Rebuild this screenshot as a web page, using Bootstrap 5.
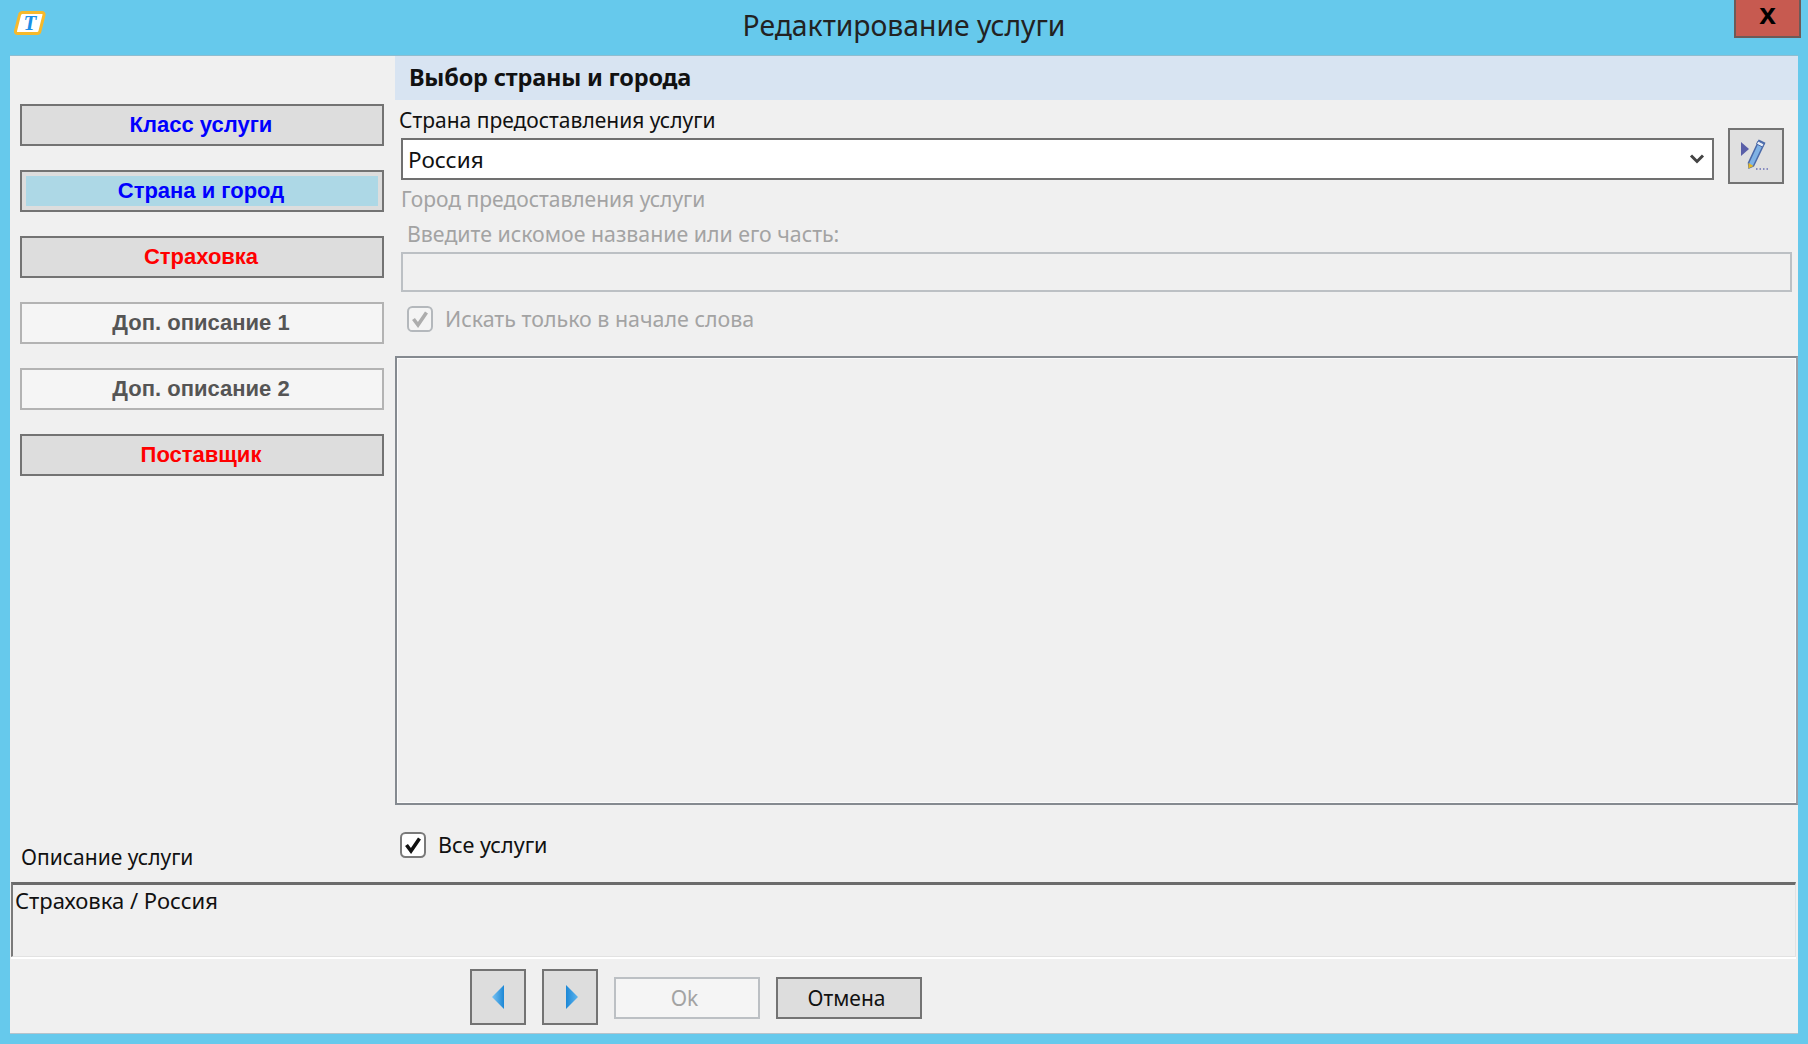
<!DOCTYPE html>
<html lang="ru">
<head>
<meta charset="utf-8">
<title>Редактирование услуги</title>
<link href="https://cdn.jsdelivr.net/npm/bootstrap@5.3.0/dist/css/bootstrap.min.css" rel="stylesheet">
<style>
html,body{height:100%;margin:0}
body{background:#66c9ec;color:#111;font-family:"Noto Sans","Liberation Sans",sans-serif;font-size:21px;line-height:24px;overflow:hidden}
.win{height:1044px;width:1808px}
.titlebar{height:55px;position:relative}
.titletext{font-size:28.300px;line-height:34px;color:#222;padding-top:8px;text-align:center}
.appicon{position:absolute;left:14px;top:10px}
.closebtn{position:absolute;left:1734px;top:-2px;width:67px;height:40px;background:#c75a50;border:2px solid #6d5a58;border-radius:0;padding:0 0 8px;font:bold 30px/24px "Liberation Sans",sans-serif;color:#000}
.client{margin-left:10px;width:1788px;height:979px;background:#f0f0f0;border-top:1px solid #8fbdd0;border-bottom:1px solid #b5c3cc}
.upper{height:827px}
.leftcol{width:385px;padding:48px 0 0 10px}
.stepbtn{width:364px;height:42px;padding:0 2px 0 0;border-radius:0;background:#ddd;border:2px solid #737373;font:bold 22px/36px "Liberation Sans",sans-serif;color:#00f;margin-bottom:24px;display:block}
.stepbtn.cur{box-shadow:inset 0 0 0 4px #ddd;background:#add8e6}
.stepbtn.warn{color:#f00}
.stepbtn.opt{background:#f5f5f5;border-color:#b3b3b3;color:#555}
.svcname{margin:0 0 13px 1px}
.rightcol{width:1403px}
.hdrband{height:44px;background:#d8e4f2;padding-left:14px;font-weight:700;font-size:23.500px;line-height:42px;margin-bottom:8px;letter-spacing:-.2px}
.fld{padding-left:6px;padding-right:5px}
.lbl{line-height:24px;height:26px}
.lbl.first{height:30px;margin-left:-2px}
.lbl.city{margin-top:3px}
.combo{width:1313px;height:42px;border:2px solid #707070;border-radius:0;padding:0 30px 0 5px;font:22.500px "Noto Sans","Liberation Sans",sans-serif;color:#111;background-color:#fff;background-image:url("data:image/svg+xml,%3Csvg xmlns='http://www.w3.org/2000/svg' viewBox='0 0 16 12'%3E%3Cpath d='M2 2.5l6 6 6-6' fill='none' stroke='%23444' stroke-width='3'/%3E%3C/svg%3E");background-size:16px 12px;background-position:right 7px center}
.editbtn{width:56px;height:56px;background:#e0e0e0;border:2px solid #737373;border-radius:0;padding:0;margin:20px 0 0 14px}
.muted{color:#a3a3a3}
.hint{margin-top:9px;padding-left:6px;font-size:21.300px}
.searchbox{width:1391px;height:40px;border:2px solid #bcc0c4;border-radius:0;background:#f0f0f0;margin-top:4px}
.searchbox:disabled{background:#f0f0f0}
.chk{width:26px;height:26px;margin:0;border-radius:0;border:2px solid #7a7a7a;background-color:#fff;opacity:1!important;flex:none}
.chk:checked{background-color:#fff;border-color:#7a7a7a;background-image:url("data:image/svg+xml,%3Csvg xmlns='http://www.w3.org/2000/svg' viewBox='0 0 22 22'%3E%3Cpath d='M4.5 11l4.5 6L17.5 4.5' fill='none' stroke='%23111' stroke-width='3.6'/%3E%3C/svg%3E")}
.chk.off:checked{border-color:#b4b8bc;background-color:#f4f4f4;background-image:url("data:image/svg+xml,%3Csvg xmlns='http://www.w3.org/2000/svg' viewBox='0 0 22 22'%3E%3Cpath d='M4.5 11l4.5 6L17.5 4.5' fill='none' stroke='%23adadad' stroke-width='3.6'/%3E%3C/svg%3E")}
.sameline{gap:12px}
.onlystart{margin:14px 0 24px 6px;font-size:21.400px}
.allsvc{margin:27px 0 0 5px;font-size:21.600px}
.listpane{height:449px;border:2px solid #858a90;border-right-color:#9aa0a8;box-shadow:inset 0 0 0 1px #fbfbfb;background:#f0f0f0}
.descbox{margin:0 2px 0 1px;height:75px;border-style:solid;border-color:#6b6b6b #e2e2e2 #e2e2e2 #7a7a7a;border-width:3px 1px 1px 2px;padding:3px 0 0 2px;line-height:24px;font-size:22px;box-shadow:0 2px 0 #fff}
.navrow{padding:12px 0 0 460px;gap:16px;height:76px}
.sqbtn{width:56px;height:56px;background:#ddd;border:2px solid #737373;border-radius:0;padding:0}
.cmdbtn{width:146px;height:42px;background:#ddd;border:2px solid #737373;border-radius:0;padding:0 5px 0 0;font:21px/36px "Noto Sans","Liberation Sans",sans-serif;color:#111;margin-top:8px}
.cmdbtn:disabled{background:#f5f5f5;border-color:#bcc0c4;color:#a3a3a3;opacity:1}
</style>
</head>
<body>
<div class="win d-flex flex-column">
  <div class="titlebar flex-shrink-0">
    <svg class="appicon" width="32" height="26" viewBox="0 0 32 26" aria-hidden="true">
      <path d="M8 2.500H28a2 2 0 0 1 2 2.500L26 21a3 3 0 0 1-3 2.500H3.500a2 2 0 0 1-2-2.500L5.500 5A3 3 0 0 1 8 2.500Z" fill="#fff" stroke="#f6b92b" stroke-width="3"/>
      <text x="16" y="20" text-anchor="middle" font-family="Liberation Serif" font-style="italic" font-weight="700" font-size="21" fill="#1a8fe6">T</text>
    </svg>
    <div class="titletext">Редактирование услуги</div>
    <button class="btn closebtn" type="button">x</button>
  </div>
  <div class="client d-flex flex-column">
    <div class="upper d-flex">
      <div class="leftcol d-flex flex-column justify-content-between flex-shrink-0">
        <div>
          <button class="btn stepbtn" type="button">Класс услуги</button>
          <button class="btn stepbtn cur" type="button">Страна и город</button>
          <button class="btn stepbtn warn" type="button">Страховка</button>
          <button class="btn stepbtn opt" type="button">Доп. описание 1</button>
          <button class="btn stepbtn opt" type="button">Доп. описание 2</button>
          <button class="btn stepbtn warn" type="button">Поставщик</button>
        </div>
        <div class="svcname">Описание услуги</div>
      </div>
      <div class="rightcol">
        <div class="hdrband">Выбор страны и города</div>
        <div class="fld d-flex">
          <div>
            <div class="lbl first">Страна предоставления услуги</div>
            <select class="form-select combo"><option>Россия</option></select>
          </div>
          <button class="btn editbtn flex-shrink-0 d-flex align-items-center justify-content-center" type="button" aria-label="Правка">
            <svg width="36" height="36" viewBox="0 0 36 36" aria-hidden="true">
              <path d="M3 4l8 7-8 7Z" fill="#5a5fa8"/>
              <path d="M21 2.500l5.500 2.500-11 23-4.500 2-.5-5Z" fill="#7fb2e5" stroke="#4a69a8" stroke-width="1.500"/>
              <path d="M20 3l6 3-1.500 3-6-3Z" fill="#e9eef7" stroke="#4a69a8"/>
              <path d="M10.500 25l0 5.500 5-2.500Z" fill="#e8b923"/>
              <path d="M18 31h1.500M21.500 31h1.500M25 31h1.500M28.500 31h1.500" stroke="#6a6fb5" stroke-width="1.600"/>
            </svg>
          </button>
        </div>
        <div class="fld muted">
          <div class="lbl city">Город предоставления услуги</div>
          <div class="lbl hint">Введите искомое название или его часть:</div>
          <input class="form-control searchbox" type="text" disabled>
          <div class="d-flex align-items-center sameline onlystart">
            <input class="form-check-input chk off" type="checkbox" checked disabled>
            <span>Искать только в начале слова</span>
          </div>
        </div>
        <div class="listpane"></div>
        <div class="d-flex align-items-center sameline allsvc">
          <input class="form-check-input chk" type="checkbox" checked>
          <span>Все услуги</span>
        </div>
      </div>
    </div>
    <div class="descbox">Страховка / Россия</div>
    <div class="navrow d-flex align-items-start">
      <button class="btn sqbtn d-flex align-items-center justify-content-center" type="button" aria-label="Назад">
        <svg width="18" height="28" viewBox="0 0 18 28" aria-hidden="true"><defs><linearGradient id="ga" x1="0" x2="1"><stop offset="0" stop-color="#7cc4f2"/><stop offset="1" stop-color="#1b87d6"/></linearGradient></defs><path d="M15 2v24L3 14Z" fill="url(#ga)"/></svg>
      </button>
      <button class="btn sqbtn d-flex align-items-center justify-content-center" type="button" aria-label="Вперёд">
        <svg width="18" height="28" viewBox="0 0 18 28" aria-hidden="true"><defs><linearGradient id="gb" x1="0" x2="1"><stop offset="0" stop-color="#1b87d6"/><stop offset="1" stop-color="#5fb5ee"/></linearGradient></defs><path d="M5 2v24l12-12Z" fill="url(#gb)"/></svg>
      </button>
      <button class="btn cmdbtn" type="button" disabled>Ok</button>
      <button class="btn cmdbtn" type="button">Отмена</button>
    </div>
  </div>
</div>
<script src="https://cdn.jsdelivr.net/npm/bootstrap@5.3.0/dist/js/bootstrap.bundle.min.js"></script>
</body>
</html>
